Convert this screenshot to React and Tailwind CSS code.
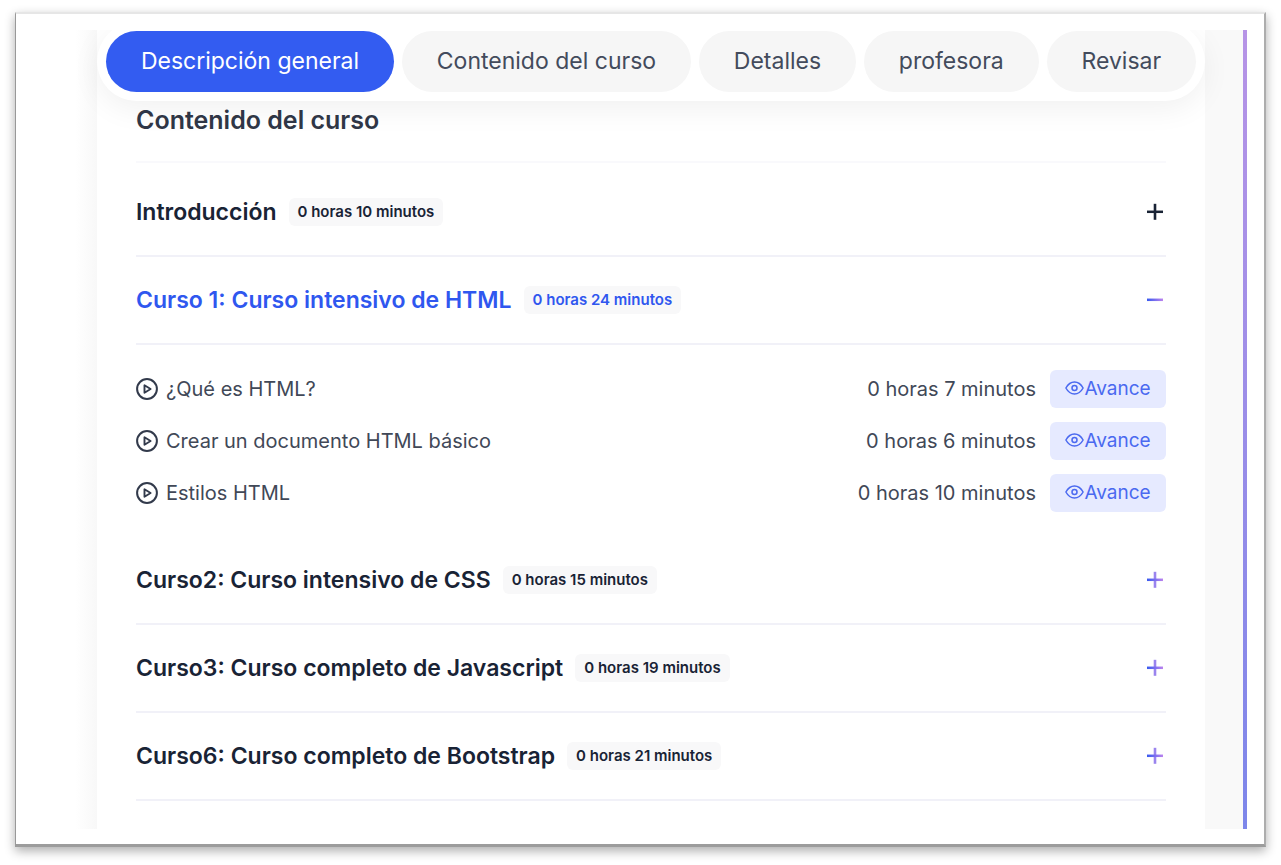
const tabs = ["Descripción general", "Contenido del curso", "Detalles", "profesora", "Revisar"];

const lessons = [
  { title: "¿Qué es HTML?", time: "0 horas 7 minutos" },
  { title: "Crear un documento HTML básico", time: "0 horas 6 minutos" },
  { title: "Estilos HTML", time: "0 horas 10 minutos" },
];

function Toggle({ open, dark, id }) {
  const stroke = dark ? "#192335" : `url(#${id})`;
  return (
    <svg width="18" height="18" viewBox="0 0 18 18" fill="none" className="mr-0.5" aria-hidden="true">
      <defs>
        <linearGradient id={id} gradientUnits="userSpaceOnUse" x1="0" y1="0" x2="18" y2="0">
          <stop offset="0" stopColor="#2f57ef" />
          <stop offset="1" stopColor="#c586ee" />
        </linearGradient>
      </defs>
      {!open && <path d="M9 0.8V16.8" stroke={dark ? stroke : "#9a84ee"} strokeWidth="2.6" />}
      <path d="M1 8.8H17" stroke={stroke} strokeWidth="2.5" />
    </svg>
  );
}

function Section({ id, title, time, open, dark }) {
  return (
    <h3 className="border-b-2 border-[#f1f1f8]">
      <button
        type="button"
        aria-expanded={!!open}
        className={
          open
            ? "flex h-[86px] w-full items-center text-left text-[#2f57ef]"
            : "flex h-[86px] w-full items-center text-left text-[#192335]"
        }
      >
        <span className="text-[23px] leading-8 font-semibold">{title}</span>
        <span className="ml-3 rounded-md bg-[#f8f8f9] px-[9px] py-1 text-[15px] leading-5 font-semibold">{time}</span>
        <span className="ml-auto">
          <Toggle open={open} dark={dark} id={id} />
        </span>
      </button>
    </h3>
  );
}

function PlayIcon() {
  return (
    <svg width="22" height="22" viewBox="0 0 22 22" fill="none" stroke="#323a4b" aria-hidden="true">
      <circle cx="11" cy="11" r="9.9" strokeWidth="2" />
      <path d="M8.5 7.3V14.7L14.6 11Z" strokeWidth="1.9" strokeLinejoin="round" />
    </svg>
  );
}

function EyeIcon() {
  return (
    <svg width="19" height="16" viewBox="0 0 19 16" fill="none" stroke="#4a69f0" strokeWidth="1.5" aria-hidden="true">
      <path d="M0.9 7C3 3.2 6 1 9.5 1S16 3.2 18.1 7C16 10.8 13 13 9.5 13S3 10.8 0.9 7Z" strokeLinejoin="round" />
      <circle cx="9.5" cy="7" r="2.5" />
    </svg>
  );
}

export default function App() {
  return (
    <div className="min-h-screen bg-white px-[15px] pt-3 pb-4 font-[Inter,'Noto_Sans',sans-serif]">
      <main className="border border-t-2 border-r-2 border-b-3 border-t-[#e6e6e6] border-r-[#adadad] border-b-[#9c9c9c] border-l-[#999999] bg-white pt-4 pr-[17px] pb-[15px] pl-[59px] shadow-[0_4px_10px_rgba(0,0,0,0.32)]">
        <div className="flex overflow-hidden">
          <div className="w-[22px] shrink-0 bg-linear-to-r from-white to-[#f8f8f8]" />
          <div className="min-w-0 flex-1">
            <nav className="relative -mt-2 rounded-full bg-white px-[9px] pt-[9px] pb-[9px] shadow-[0_8px_30px_rgba(0,0,0,0.06)]">
              <div className="flex gap-2">
                {tabs.map((tab, i) => (
                  <button
                    key={tab}
                    type="button"
                    className={
                      i === 0
                        ? "h-[61px] flex-auto rounded-full bg-[#335cf1] text-[23px] whitespace-nowrap text-white"
                        : "h-[61px] flex-auto rounded-full bg-[#f6f6f6] text-[23px] whitespace-nowrap text-[#434b5c]"
                    }
                  >
                    {tab}
                  </button>
                ))}
              </div>
            </nav>
            <div className="px-[39px] pb-7">
              <h2 className="mb-1.5 border-b-2 border-[#f9f9fc] pt-[3px] pb-[25px] text-[25px] leading-8 font-semibold text-[#303747]">
                Contenido del curso
              </h2>
              <Section id="intro" title="Introducción" time="0 horas 10 minutos" dark />
              <Section id="curso1" title="Curso 1: Curso intensivo de HTML" time="0 horas 24 minutos" open />
              <ul className="flex flex-col gap-3.5 pt-[25px] pb-[25px]">
                {lessons.map((l) => (
                  <li key={l.title} className="flex h-[38px] items-center text-xl text-[#414857]">
                    <PlayIcon />
                    <span className="ml-2">{l.title}</span>
                    <span className="ml-auto">{l.time}</span>
                    <button
                      type="button"
                      className="ml-3.5 flex h-[38px] w-[116px] items-center justify-center rounded-md bg-[#e6eaff] text-[19px] text-[#4a69f0]"
                    >
                      <EyeIcon />
                      Avance
                    </button>
                  </li>
                ))}
              </ul>
              <Section id="curso2" title="Curso2: Curso intensivo de CSS" time="0 horas 15 minutos" />
              <Section id="curso3" title="Curso3: Curso completo de Javascript" time="0 horas 19 minutos" />
              <Section id="curso6" title="Curso6: Curso completo de Bootstrap" time="0 horas 21 minutos" />
            </div>
          </div>
          <div className="w-[38px] shrink-0 bg-[#f9f9f9]" />
          <div className="w-1 shrink-0 bg-linear-to-b from-[#b794e6] to-[#7d86ea]" />
        </div>
      </main>
    </div>
  );
}
